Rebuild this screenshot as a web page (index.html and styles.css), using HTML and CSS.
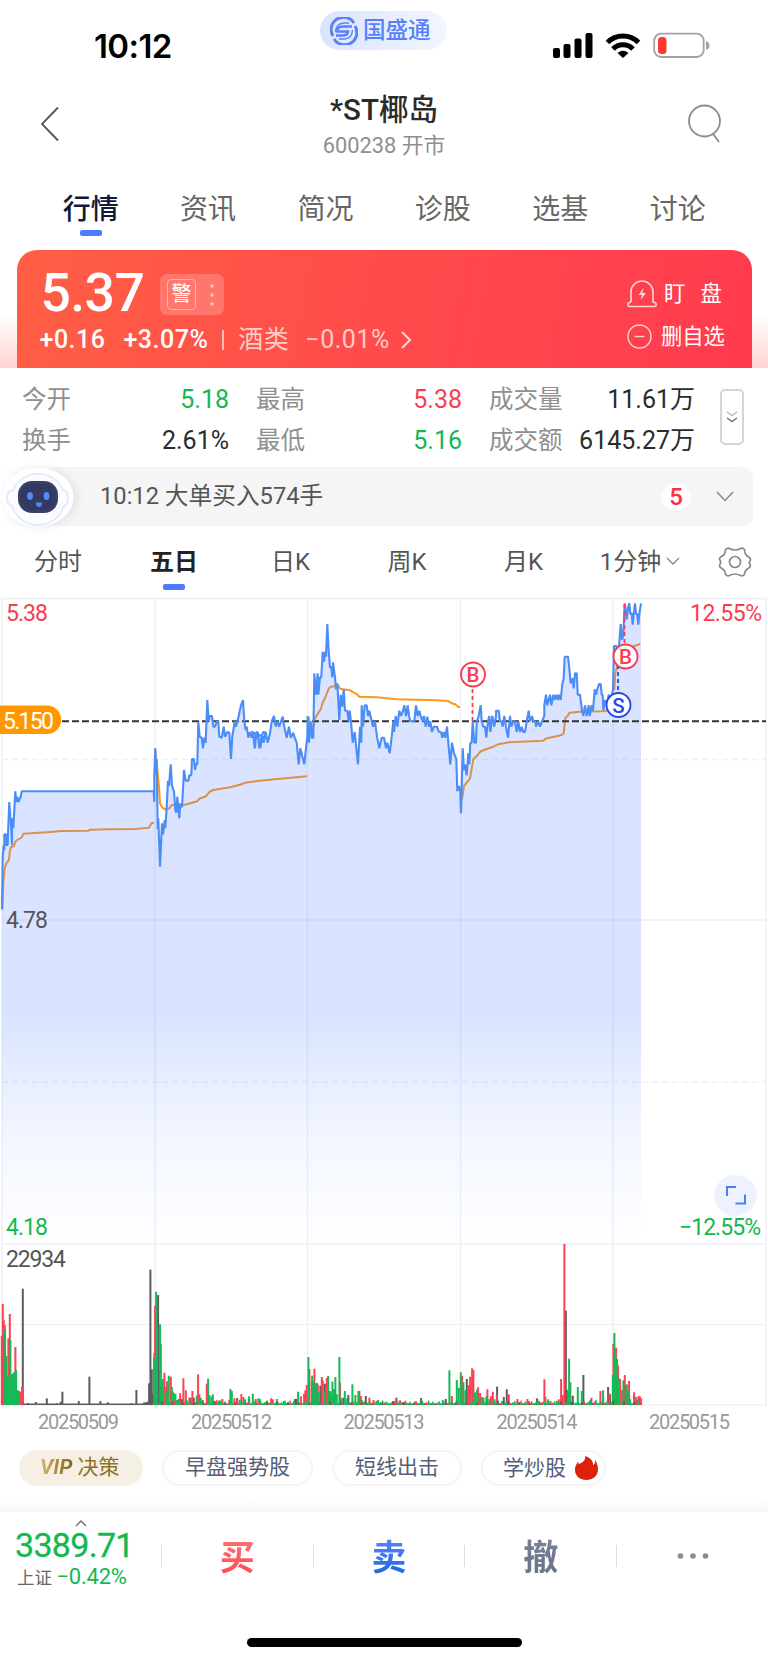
FILE: index.html
```html
<!DOCTYPE html>
<html lang="zh-CN">
<head>
    <meta charset="UTF-8">
    <meta name="viewport" content="width=device-width, initial-scale=1.0">
    <title>*ST椰岛 600238</title>
    <link rel="stylesheet" href="styles.css">
</head>
<body>
    <div class="statusbar">
        <div class="clock">10:12</div>
        <div class="brand">
            <svg width="28" height="28" viewBox="0 0 28 28" fill="none" stroke="#5b82f7">
                <path d="M3 19A12 12 0 0 1 24 6" stroke-width="3"/>
                <path d="M25 9A12 12 0 0 1 4 22" stroke-width="3"/>
                <path d="M22 9.500H12Q7 10 7 14.500H18Q17.500 18.500 13 18.500H6" stroke-width="2.600"/>
                <path d="M22.500 13Q22 22 14 22H9M5.500 15Q6 6.500 14 6H19" stroke-width="1.400"/>
            </svg>
            <span>国盛通</span>
        </div>
        <svg class="signals" width="160" height="26" viewBox="552 32 160 26">
            <rect x="553" y="48" width="7" height="10" rx="2"/>
            <rect x="563.500" y="44" width="7" height="14" rx="2"/>
            <rect x="574.500" y="38.500" width="7" height="19.500" rx="2"/>
            <rect x="585.500" y="33" width="7" height="25" rx="2"/>
            <g fill="none" stroke="#000" stroke-width="5">
                <path d="M607.500 42.500A22 22 0 0 1 638.500 42.500"/>
                <path d="M613 49A14 14 0 0 1 633 49"/>
            </g>
            <path d="M617.500 53Q623 48.500 628.500 53L623 58Z"/>
            <rect x="654.200" y="33.700" width="49.500" height="23.300" rx="7" fill="none" stroke="#a3a3a3" stroke-width="1.800"/>
            <rect x="658" y="37" width="8.500" height="17" rx="3.500" fill="#fb3b30"/>
            <path d="M706 41Q709.500 42 709.500 45.500T706 50Z" fill="#a3a3a3"/>
        </svg>
    </div>

    <header class="header">
        <svg class="back" width="20" height="36" viewBox="0 0 20 36" fill="none" stroke="#555" stroke-width="1.800"><path d="M18 1.500L2 18L18 34.500"/></svg>
        <div class="title">
            <h1>*ST椰岛</h1>
            <p>600238 开市</p>
        </div>
        <svg class="search" width="34" height="40" viewBox="0 0 34 40" fill="none" stroke="#8c8c8c" stroke-width="1.800"><circle cx="16.500" cy="17" r="15.500"/><path d="M25 30L31 38"/></svg>
    </header>

    <nav class="tabs">
        <a class="active">行情</a>
        <a>资讯</a>
        <a>简况</a>
        <a>诊股</a>
        <a>选基</a>
        <a>讨论</a>
    </nav>

    <div class="quote-wrap">
        <div class="quote">
            <div class="quote-main">
                <div class="price-row">
                    <span class="price">5.37</span>
                    <span class="warn"><b>警</b><svg width="4" height="24" viewBox="0 0 4 24" fill="#ffc2bd"><circle cx="2" cy="3" r="1.800"/><circle cx="2" cy="12" r="1.800"/><circle cx="2" cy="21" r="1.800"/></svg></span>
                </div>
                <div class="change-row">
                    <span>+0.16</span>
                    <span class="pct">+3.07%</span>
                    <i></i>
                    <span class="sector">酒类</span>
                    <span class="sector sector-pct">−0.01%</span>
                    <svg width="10" height="18" viewBox="0 0 10 18" fill="none" stroke="#ffd5d0" stroke-width="2"><path d="M1 1L9 9L1 17"/></svg>
                </div>
            </div>
            <div class="quote-actions">
                <div>
                    <svg width="30" height="28" viewBox="0 0 30 28" fill="none" stroke="#ffd5d5" stroke-width="1.600"><path d="M4 22V12A11 11 0 0 1 26 12V22Q29.200 22.500 29.200 24.500T27 26.500H3Q.800 26.500 .800 24.500T4 22"/><path d="M16.500 8L11.500 15H15L13.500 20L19 13H15.500Z" fill="#ffd5d5" stroke="none"/></svg>
                    <span class="wide">盯&nbsp;盘</span>
                </div>
                <div>
                    <svg class="minus" width="25" height="25" viewBox="0 0 25 25" fill="none" stroke="#ffd5d5" stroke-width="1.400"><circle cx="12.500" cy="12.500" r="11.500"/><path d="M7.500 12.500H17.500"/></svg>
                    <span>删自选</span>
                </div>
            </div>
        </div>
    </div>

    <section class="stats">
        <dl>
            <dt>今开</dt><dd class="green">5.18</dd>
            <dt>最高</dt><dd class="red">5.38</dd>
            <dt>成交量</dt><dd>11.61万</dd>
            <dt>换手</dt><dd>2.61%</dd>
            <dt>最低</dt><dd class="green">5.16</dd>
            <dt>成交额</dt><dd>6145.27万</dd>
        </dl>
        <div class="more">
            <svg width="12" height="12" viewBox="0 0 12 12" fill="none" stroke-width="1.500"><path d="M1 1L6 4.500L11 1" stroke="#bbb"/><path d="M1 7L6 10.500L11 7" stroke="#777"/></svg>
        </div>
    </section>

    <section class="notice">
        <svg class="robot" width="74" height="60" viewBox="0 0 74 60">
            <ellipse cx="38" cy="30" rx="35.500" ry="29.500" fill="#fff"/>
            <path d="M13 23A27 26 0 0 1 63 23Q68 24 68 31T64 39A27 26 0 0 1 12 39Q7 38 7 31T13 23Z" fill="#fbfcff" stroke="#e3ebfd" stroke-width="2"/>
            <rect x="18" y="14" width="40" height="32" rx="14" fill="#394068"/>
            <rect x="20.500" y="17" width="35" height="26" rx="11" fill="#323a61"/>
            <ellipse cx="30" cy="29" rx="2.900" ry="4" fill="#4f8df8"/>
            <ellipse cx="46.500" cy="29" rx="2.900" ry="4" fill="#4f8df8"/>
            <path d="M36 35.500H42Q42 40 39 40T36 35.500Z" fill="#4f8df8"/>
        </svg>
        <span class="notice-text">10:12 大单买入574手</span>
        <span class="count">5</span>
        <svg width="18" height="11" viewBox="0 0 18 11" fill="none" stroke="#888" stroke-width="1.500"><path d="M1 1L9 9.500L17 1"/></svg>
    </section>

    <nav class="periods">
        <a>分时</a>
        <a class="active">五日</a>
        <a>日K</a>
        <a>周K</a>
        <a>月K</a>
        <a>1分钟<svg width="14" height="8" viewBox="0 0 14 8" fill="none" stroke="#888" stroke-width="1.300"><path d="M1 1L7 7L13 1"/></svg></a>
        <a class="gear"><svg width="34" height="32" viewBox="-17 -16 34 32" fill="none" stroke="#888" stroke-width="1.700"><path d="M-5.500 -13.500Q0 -10.500 5.500 -13.500Q7.500 -14.500 9.500 -12.500Q9.500 -7 14.500 -4.500Q16.500 -2.500 14.500 0L14.200 1Q16.500 4 14.500 5.500Q9.500 8 9.500 12.500Q7.500 14.500 5.500 13.500Q0 10.500 -5.500 13.500Q-7.500 14.500 -9.500 12.500Q-9.500 8 -14.500 5.500Q-16.500 4 -14.500 1.500V-1Q-16.500 -3 -14.500 -5Q-9.500 -7 -9.500 -12.500Q-7.500 -14.500 -5.500 -13.500Z"/><circle r="5.500"/></svg></a>
    </nav>

    <!-- Chart is drawn in page units, price pane 598-1244, volume pane 1244-1405 -->
    <svg class="chart" width="768" height="834" viewBox="0 598 768 834">
        <defs>
            <linearGradient id="fade" gradientUnits="userSpaceOnUse" x1="0" y1="1015" x2="0" y2="1244">
                <stop offset="0" stop-color="#4c7dff" stop-opacity=".21"/>
                <stop offset=".5" stop-color="#4c7dff" stop-opacity=".075"/>
                <stop offset="1" stop-color="#4c7dff" stop-opacity="0"/>
            </linearGradient>
        </defs>
        <g class="grid">
            <path d="M2 598.500H766V1405H2ZM155 598V1405M307.500 598V1405M460.500 598V1405M613 598V1405M2 920H766M2 1244H766M2 1324.500H766"/>
            <path d="M2 759.500H766M2 1082H766" stroke-dasharray="6 4"/>
        </g>
        <g id="average"></g>
        <path id="area" fill="url(#fade)"/>
        <path d="M2 721.300H766" stroke="#333" stroke-width="2" stroke-dasharray="7 3"/>
        <path id="price"/>
        <g id="volume"></g>

        <g class="marks">
            <path d="M472.500 689V721M624.500 604V643" stroke="#fb3c50" stroke-dasharray="4 3"/>
            <path d="M618 665V694" stroke="#2948e8" stroke-dasharray="4 3"/>
            <g class="buy"><circle cx="473" cy="674.500" r="12"/><text x="473" y="682">B</text></g>
            <g class="buy"><circle cx="625.500" cy="656.500" r="12"/><text x="625.500" y="664">B</text></g>
            <g class="sell"><circle cx="618.500" cy="705" r="12"/><text x="618.500" y="712.500">S</text></g>
        </g>
        <path d="M0 705.500H48A14.300 14.300 0 0 1 48 734H0Z" fill="#ff9800"/>
        <g class="labels">
            <text x="3" y="728.500" fill="#fff" textLength="51">5.150</text>
            <text x="6" y="621" fill="#fb3c50" textLength="42">5.38</text>
            <text x="690" y="621" fill="#fb3c50" textLength="72">12.55%</text>
            <text x="6" y="928" fill="#555" textLength="42">4.78</text>
            <text x="6" y="1234.500" fill="#14b850" textLength="42">4.18</text>
            <text x="679" y="1234.500" fill="#14b850" textLength="82">−12.55%</text>
            <text x="6" y="1267" fill="#555" textLength="60">22934</text>
        </g>
        <g class="dates">
            <text x="38" y="1429" textLength="81">20250509</text>
            <text x="191" y="1429" textLength="81">20250512</text>
            <text x="343.500" y="1429" textLength="81">20250513</text>
            <text x="496.500" y="1429" textLength="81">20250514</text>
            <text x="649" y="1429" textLength="81">20250515</text>
        </g>
        <ellipse cx="735.500" cy="1195.500" rx="21.500" ry="20.500" fill="#edf2fe"/>
        <path d="M736 1187H727V1196M745 1194.500V1203.500H735.500" fill="none" stroke="#4c7dff" stroke-width="2"/>
    </svg>

    <div class="chips">
        <span class="vip"><em>VIP</em>决策</span>
        <span>早盘强势股</span>
        <span>短线出击</span>
        <span class="hot">学炒股<svg width="23" height="24" viewBox="0 0 23 24"><path d="M10 0C12 5 4 8 4 8C3 8 3.500 5 3.500 5C0 10 0 12 0 14C0 20 5 24 11.500 24S23 20 23 13C23 9 21 5 20 4C20.500 7 19 9 18 9C18.500 4 14 1 10 0Z" fill="#dc210c"/></svg></span>
    </div>

    <footer class="trade">
        <div class="index">
            <svg width="12" height="7" viewBox="0 0 12 7" fill="none" stroke="#777" stroke-width="1.500"><path d="M1 6L6 1L11 6"/></svg>
            <strong>3389.71</strong>
            <p>上证 <span>−0.42%</span></p>
        </div>
        <button class="buy-btn"><span>买</span></button>
        <button class="sell-btn"><span>卖</span></button>
        <button class="cancel-btn"><span>撤</span></button>
        <button><svg width="32" height="8" viewBox="0 0 32 8" fill="#8c8c8c"><circle cx="3.500" cy="4" r="2.800"/><circle cx="16" cy="4" r="2.800"/><circle cx="28.500" cy="4" r="2.800"/></svg></button>
    </footer>
    <div class="home"></div>

    <script>
        // Coordinates are in thirds of a pixel, [x offset, x,y, x,y, ...]
        const price = [
            [0, 6,958,8,800,11,765,13,780,13,733,18,733,18,765,23,765,24,733,28,636,34,720,36,765,36,685,40,715,46,604,49,636,52,620,56,636,62,620,65,604,461,604,463,636],
            [0, 463,555,466,474,468,555,470,507,473,717,475,685,480,830,486,700,489,733,494,690,496,715,500,652,504,572,507,588,512,523,516,588,522,604,526,660,529,668,532,620,538,685,541,640,546,652,552,540,557,572,565,572,568,556,574,556,576,507,582,507,585,540,588,523,592,523,595,395,599,440,605,443,609,475,613,443,617,458,622,330,626,394,629,378,636,378,640,410,645,410,650,395,655,394,658,440,665,443,671,410,675,440,682,426,688,428,693,507,697,440,704,394,708,410,716,378,723,346,729,330,733,394,737,420,740,410,745,443,750,426,755,443,760,430,765,475,769,426,774,428,778,475,784,443,
                790,426,794,426,798,443],
            [750, 4,426,9,426,14,475,19,426,24,443,31,475,36,443,41,458,47,426,53,458,60,430,65,394,72,378,77,410,82,394,88,410,93,394,98,380,103,410,110,443,117,410,122,443,130,428,134,443,140,458,146,523,151,475,163,523,168,475,172,440],
            [750, 173,378,177,458,182,394,186,443,190,443,193,250,198,314,203,250,205,314,210,262,214,262,218,185,222,215,226,185,228,200,232,102,236,185,240,232,244,232,247,262,249,217,255,262,258,298,262,280,268,390,272,314,277,350,281,298,285,362,292,362,296,394,299,362,303,394,308,458,314,426,324,523,330,410,334,458,335,346,339,410,344,346,350,346,354,378,358,362,365,394,369,410,375,394,381,440,388,475,395,443,402,443,408,475,412,458,419,490,425,440,430,394,432,426,437,378,442,410,448,362,453,378,459,362,463,346,468,378,473,346,477,378,481,394,493,394,498,346,503,378,508,362,512,378,518,394,522,378,527,410,532,380,537,410,541,394,546,426,551,410,561,410,566,425,573,426,577,443,581,426,586,443,591,410,595,458,601,523,606,458,612,490,619,507,622,604,627,588,631,604,633,670],
            [1350, 33,670,38,475,42,540,45,523,50,556,55,490,58,523,61,458,65,458,68,394,73,458,78,458,80,394,86,378,92,346,95,394,100,410,105,410,109,443,114,394,118,378,121,426,127,378,133,410,138,378,138,362,146,362,150,394,154,394,158,410,163,378,168,410,174,443,180,378,184,410,190,394,195,394,200,426,205,394,210,426,215,410,220,426,225,426,230,394,236,362,240,394,246,378,250,394,256,394,258,410,265,394,270,410,276,394,283,378,283,346,288,314,292,346,300,314,304,346,310,314,313,330,318,314,323,330,326,314,332,330,337,282,341,265,344,200,354,200,358,235,362,280,368,265,371,295,375,250,380,250,383,314,390,314,396,362,400,378,405,346,410,378,416,346,419,378,425,346,429,362,434,298,438,314,442,298,447,282,452,282,455,314,458,314,460,360,466,330,472,346,476,314,482,330,489,300],
            [1350, 492,168,500,168,503,220,512,102,516,150,520,135,524,40,527,60,530,88,534,55,538,40,541,72,545,70,548,104,551,72,555,40,558,72,562,72,565,104,568,72,573,40]
        ];
        const average = [
            [0, 7,958,10,880,14,835,20,818,26,812,28,800,30,780,34,771,42,768,46,755,52,750,62,744,67,740,70,731,140,727,185,723,265,722,270,719,330,718,405,717,440,714,447,713,454,700,462,698],
            [0, 466,480,474,560,477,590,480,640,486,652,495,658,506,656,516,645,555,644,592,634,598,626,618,619,628,606,640,600,690,592,720,584,735,578,778,572,810,569,830,567,890,562,921,559],
            [750, 176,380,180,410,190,410,194,388,204,370,212,358,218,338,226,322,236,296,242,290,266,287,270,296,300,301,312,308,320,312,328,320,380,322,440,328,560,331,595,333,605,340,616,343,624,350,630,352],
            [1350, 36,628,42,588,60,566,70,508,80,498,92,484,112,476,130,470,145,463,178,457,280,452,286,446,335,435,341,430,344,400,346,384,353,378,358,368,390,365,455,364,489,360],
            [1350, 493,300,496,250,500,235,505,215,540,172,552,168,571,162]
        ];
        const toPoints = ([dx, ...v]) => {
            const pts = [];
            for (let i = 0; i < v.length; i += 2) {
                pts.push(((v[i] + dx) / 3).toFixed(1) + ' ' + (590 + v[i + 1] / 3).toFixed(1));
            }
            return pts.join('L');
        };
        const line = price.map(toPoints).join('L');
        document.getElementById('price').setAttribute('d', 'M' + line);
        document.getElementById('area').setAttribute('d', 'M' + line + 'V1244H2Z');
        document.getElementById('average').innerHTML = average.map(a => `<path d="M${toPoints(a)}"/>`).join('');

        // Volume bars: x,height pairs, same units
        const GREY = '#5c5c5c', RED = '#fb4154', GREEN = '#16b955';
        const volume = [
            [GREY, 68,349,84,6,107,9,140,20,170,5,187,40,182,10,236,12,268,85,301,12,323,8,393,5,409,45,432,8,438,8,443,10,447,65,451,406,455,107,458,34,474,330,477,105,545,18,571,22,581,22,597,20,608,14,711,21,747,18,800,8,885,18,889,18,951,65,961,58,974,64,990,40,1030,22,1045,30,1097,27,1189,22,1214,8,1263,21,1337,18,1400,78,1491,55,1511,24,1520,47,1611,20,1697,283,1700,46,1718,28,1750,90,1824,54,1830,32],
            [RED, 5,208,8,303,11,254,14,240,25,200,29,273,46,174,59,40,63,40,66,55,463,157,465,298,482,183,485,57,493,97,498,54,501,71,512,85,540,35,550,80,557,44,568,22,577,42,594,92,598,32,620,64,650,14,658,14,667,18,688,15,703,20,711,17,724,33,730,24,767,18,813,20,818,17,902,26,912,34,916,44,920,60,928,108,935,70,943,109,953,60,965,84,968,74,980,81,1000,25,1020,67,1078,42,1082,27,1108,22,1120,15,1178,11,1182,12,1189,16,1200,14,1246,11,1355,27,1386,88,1406,60,1410,85,1416,110,1420,105,1434,53,1440,36,1446,24,1462,47,1472,26,1478,40,1490,30,1526,32,1552,18,1582,18,1586,12,1633,77,1636,25,1643,10,1651,12,1676,17,1683,78,1688,30,1693,483,1703,40,1774,22,1801,42,1828,34,1840,184,1848,172,1854,118,1860,78,1866,45,1874,90,1880,62,1887,72,1902,38,1907,24,1915,26,1919,26,1923,20],
            [GREEN, 15,227,19,147,22,88,26,80,31,195,35,92,38,94,42,98,48,105,52,45,56,42,462,142,468,340,471,230,480,242,488,78,497,40,506,88,515,54,518,40,522,35,526,33,531,15,536,18,560,14,590,28,602,22,624,79,628,30,634,25,638,32,645,10,661,10,691,48,695,42,719,16,735,17,747,26,758,34,775,20,779,18,806,7,830,18,854,13,881,12,894,40,925,144,936,88,941,70,947,65,956,40,974,40,984,87,989,42,992,36,997,70,1002,48,1006,84,1010,32,1018,144,1024,20,1034,42,1041,20,1057,62,1066,30,1075,42,1085,16,1093,10,1134,15,1155,8,1205,8,1250,7,1328,15,1348,104,1370,75,1376,52,1382,98,1390,68,1396,45,1425,38,1431,46,1438,20,1450,22,1459,26,1468,18,1483,17,1506,12,1618,12,1644,17,1671,12,1707,139,1711,68,1733,54,1745,42,1770,14,1787,14,1809,44,1838,90,1843,216,1847,142,1851,138,1856,80,1870,74,1877,60,1883,44,1890,18,1913,16]
        ];
        let bars = '<path d="M22 1404.200H154" stroke="#5c5c5c" stroke-width="1.500"/><path d="M155 1404.200H641" stroke="#16b955" stroke-width="1.700"/>';
        for (const [color, ...v] of volume) {
            for (let i = 0; i < v.length; i += 2) {
                bars += `<rect x="${(v[i] / 3 - .9).toFixed(1)}" y="${(1405 - v[i + 1] / 3).toFixed(1)}" width="2" height="${(v[i + 1] / 3).toFixed(1)}" fill="${color}"/>`;
            }
        }
        // Low background trades between the peaks
        for (let i = 0; i < 230; i++) {
            const x = 157 + i * 2.100;
            const h = 1 + (i * 37 % 11) / 3;
            bars += `<rect x="${x}" y="${1405 - h}" width="1.600" height="${h}" fill="${[GREEN, RED, GREEN, GREEN, GREY][i * 7 % 5]}"/>`;
        }
        document.getElementById('volume').innerHTML = bars;
    </script>
</body>
</html>
```
FILE: styles.css
```css
:root {
    --red: #fb3c50;
    --green: #14b850;
    --blue: #4c7dff;
    --text: #2b2b2b;
    --muted: #8f8f8f;
}
* {
    box-sizing: border-box;
}
body {
    margin: 0;
    width: 768px;
    height: 1662px;
    background: #fff;
    color: var(--text);
    font-family: Roboto, "Noto Sans CJK SC", sans-serif;
    display: flex;
    flex-direction: column;
    overflow: hidden;
}
svg {
    display: block;
    flex: none;
}
h1, p, dl, dd {
    margin: 0;
}
.statusbar {
    height: 80px;
    display: grid;
    grid-template-columns: 320px 127px 1fr;
}
.clock {
    padding: 26px 0 0 94px;
    font: 600 33px/40px Inter, sans-serif;
    letter-spacing: -.600px;
    color: #000;
}
.brand {
    height: 39px;
    margin-top: 11px;
    padding-left: 10px;
    border-radius: 20px;
    background: linear-gradient(90deg, #dae4fe, #f3f6ff);
    display: flex;
    align-items: center;
    gap: 5px;
    color: #5580fb;
    font-size: 22.500px;
    font-weight: 500;
    line-height: 37px;
    white-space: nowrap;
}
.signals {
    margin: 32px 0 0 105px;
}
.header {
    height: 96px;
    padding: 0 46px 0 40px;
    display: flex;
    justify-content: space-between;
}
.back {
    margin-top: 26px;
}
.search {
    margin-top: 24px;
}
.title {
    text-align: center;
    margin-left: 20px;
}
.title h1 {
    margin-top: 10px;
    font-size: 29.500px;
    line-height: 40px;
    font-weight: 500;
}
.title p {
    margin-top: 1px;
    font-size: 21.800px;
    line-height: 30px;
    color: var(--muted);
}
.tabs {
    height: 74px;
    padding: 0 32px;
    display: grid;
    grid-template-columns: repeat(6, 117.400px);
    font-size: 28px;
    line-height: 67px;
    text-align: center;
    color: #666;
}
.active {
    position: relative;
    font-weight: 500;
}
.active::after {
    content: "";
    position: absolute;
    left: calc(50% - 11px);
    bottom: 14.500px;
    width: 22px;
    height: 5.500px;
    border-radius: 2px;
    background: var(--blue);
}
.tabs .active {
    color: #10193a;
}
.quote-wrap {
    height: 118px;
    padding: 0 16.500px;
    background: linear-gradient(180deg, #fff 55%, #ffd3d3);
}
.quote {
    height: 118px;
    border-radius: 20px 20px 0 0;
    background: linear-gradient(100deg, #ff5f45, #ff4b4b 50%, #ff3b4f);
    color: #fff;
    padding: 0 25px 0 24px;
    display: flex;
    justify-content: space-between;
}
.price-row {
    height: 67px;
    display: flex;
    align-items: center;
}
.price {
    width: 119.500px;
    padding-top: 19px;
    font-size: 53.500px;
    line-height: 68px;
    font-weight: 500;
    letter-spacing: -.600px;
}
.warn {
    width: 64px;
    height: 41px;
    margin-top: 22px;
    padding: 0 10px 0 7px;
    border-radius: 7px;
    background: rgba(255, 255, 255, .2);
    display: flex;
    align-items: center;
    justify-content: space-between;
}
.warn b {
    width: 29px;
    height: 31px;
    border: 1px solid rgba(255, 255, 255, .4);
    border-radius: 4px;
    font-size: 20px;
    line-height: 28px;
    font-weight: 500;
    text-align: center;
}
.change-row {
    display: flex;
    align-items: center;
    margin-top: 4px;
    margin-left: -1px;
    font-size: 25px;
    line-height: 38px;
    letter-spacing: .500px;
    font-weight: 500;
}
.pct {
    margin-left: 18px;
}
.change-row i {
    width: 2px;
    height: 20px;
    margin: 0 14px 0 14px;
    background: rgba(255, 255, 255, .65);
}
.sector {
    color: #ffccc8;
    font-weight: 400;
}
.sector-pct {
    margin: 0 11px 0 16px;
}
.quote-actions {
    width: 99.500px;
    padding-top: 28px;
    display: flex;
    flex-direction: column;
    gap: 12px;
    font-size: 21.300px;
    line-height: 30px;
}
.quote-actions div {
    display: flex;
    align-items: center;
    gap: 7px;
    height: 31px;
    white-space: nowrap;
}
.quote-actions .minus {
    margin-right: 2px;
}
.wide {
    word-spacing: 10px;
}
.stats {
    height: 99px;
    padding: 11px 24px 0 22px;
    display: flex;
    justify-content: space-between;
}
.stats dl {
    display: grid;
    grid-template-columns: 80px 127px 98px 135px 104px 129px;
    column-gap: 0;
    grid-auto-rows: 41px;
    font-size: 24.500px;
    line-height: 41px;
    width: 673px;
}
.stats dt {
    color: var(--muted);
    white-space: nowrap;
}
.stats dt:nth-of-type(3n + 2),
.stats dt:nth-of-type(3n) {
    padding-left: 27px;
}
.stats dd {
    text-align: right;
    white-space: nowrap;
    font-size: 25px;
}
.stats .green {
    color: var(--green);
}
.stats .red {
    color: var(--red);
}
.more {
    width: 24px;
    height: 56px;
    margin-top: 10px;
    border: 2px solid #d5d5d5;
    border-radius: 5px;
    display: flex;
    align-items: center;
    justify-content: center;
}
.notice {
    height: 59px;
    margin-right: 15px;
    padding-right: 19px;
    border-radius: 0 10px 10px 0;
    background: linear-gradient(90deg, #fff, #f5f5f5 60px);
    display: flex;
    align-items: center;
}
.robot {
    filter: drop-shadow(3px 1px 4px rgba(0, 0, 0, .08));
}
.notice-text {
    flex: 1;
    padding-left: 26px;
    font-size: 23.700px;
    line-height: 58px;
    height: 59px;
    color: #555;
}
.count {
    width: 28px;
    height: 28px;
    margin-right: 26px;
    border-radius: 50%;
    background: #fff;
    color: #fb3040;
    font-size: 24px;
    line-height: 28px;
    font-weight: 500;
    text-align: center;
}
.periods {
    height: 72px;
    padding: 0 16px 0 0;
    display: grid;
    grid-template-columns: 116px 116px 117px 116px 117px 116px 1fr;
    font-size: 24px;
    line-height: 73px;
    text-align: center;
    color: #555;
}
.periods a {
    white-space: nowrap;
}
.periods .active {
    color: #222;
    font-weight: 600;
}
.periods .active::after {
    bottom: 9.500px;
}
.periods a svg {
    display: inline-block;
    margin-left: 5px;
    vertical-align: 5px;
}
.periods .gear {
    padding-top: 20px;
    line-height: 0;
}
.periods .gear svg {
    display: block;
    margin: 0 0 0 20px;
}
.chart {
    overflow: visible;
}
.chart text {
    font-family: Roboto, sans-serif;
}
.grid {
    fill: none;
    stroke: #eef1f6;
    stroke-width: 1.500px;
}
#average {
    fill: none;
    stroke: #ff971c;
    stroke-width: 2px;
    stroke-linejoin: round;
}
#price {
    fill: none;
    stroke: #4b8df8;
    stroke-width: 2.100px;
    stroke-linejoin: bevel;
}
.marks path {
    stroke-width: 1.800px;
}
.marks circle {
    fill: #fff;
    stroke-width: 1.900px;
}
.marks text {
    font-size: 20.500px;
    font-weight: 500;
    text-anchor: middle;
}
.buy circle {
    stroke: var(--red);
}
.buy text {
    fill: var(--red);
}
.sell circle {
    stroke: #2948e8;
}
.sell text {
    fill: #2948e8;
}
.labels {
    font-size: 23px;
}
.dates {
    font-size: 20px;
    fill: #999;
}
.chips {
    height: 80px;
    padding: 18px 0 0 19px;
    display: flex;
    background: linear-gradient(180deg, #fff 85%, #f6f6f6);
    color: #555e78;
    font-size: 21px;
    line-height: 31px;
}
.chips span {
    height: 36px;
    padding: 0 21px;
    margin-right: 19px;
    border: 2px solid #f5f5f5;
    border-radius: 18px;
    background: #fff;
    white-space: nowrap;
}
.chips .vip {
    width: 124px;
    padding: 0 0 0 19px;
    border-color: #f5f0e3;
    background: #f5f0e3;
    color: #927127;
}
.vip em {
    margin-right: 3px;
    padding-right: 2px;
    font-weight: 700;
    color: transparent;
    background: linear-gradient(90deg, #d9b66c, #80611a);
    -webkit-background-clip: text;
    background-clip: text;
}
.chips .hot {
    display: flex;
    align-items: center;
    gap: 9px;
    padding: 0 6px 0 20px;
}
.trade {
    height: 126px;
    display: grid;
    grid-template-columns: 161px 151.700px 151.700px 151.700px 152px;
    background: #fff;
}
.index {
    padding: 8px 0 0 15px;
    color: var(--green);
}
.index svg {
    margin-left: 60px;
}
.index strong {
    display: block;
    margin-top: 1px;
    font-size: 34px;
    line-height: 35px;
    font-weight: 400;
    letter-spacing: -.700px;
    -webkit-text-stroke: .3px var(--green);
}
.index p {
    margin: 0 0 0 2px;
    font-size: 17.500px;
    line-height: 28px;
    color: #666;
    white-space: nowrap;
}
.index p span {
    font-size: 22px;
    letter-spacing: -.200px;
    color: var(--green);
}
.trade button {
    height: 22px;
    margin-top: 33px;
    padding: 0;
    border: 0;
    border-left: 1.500px solid #ddd;
    background: none;
    display: flex;
    align-items: center;
    justify-content: center;
    font: 700 35px/50px "Noto Sans CJK SC", sans-serif;
}
.trade button span {
    margin-top: -2px;
    color: transparent;
    -webkit-background-clip: text;
    background-clip: text;
}
.buy-btn span {
    background-image: linear-gradient(180deg, #ff7b75, #ff4653);
}
.sell-btn span {
    background-image: linear-gradient(180deg, #5f8cff, #1d62df);
}
.cancel-btn span {
    background-image: linear-gradient(180deg, #7b849b, #667086);
}
.home {
    width: 275px;
    height: 9px;
    margin-left: 247px;
    border-radius: 5px;
    background: #000;
}
```
